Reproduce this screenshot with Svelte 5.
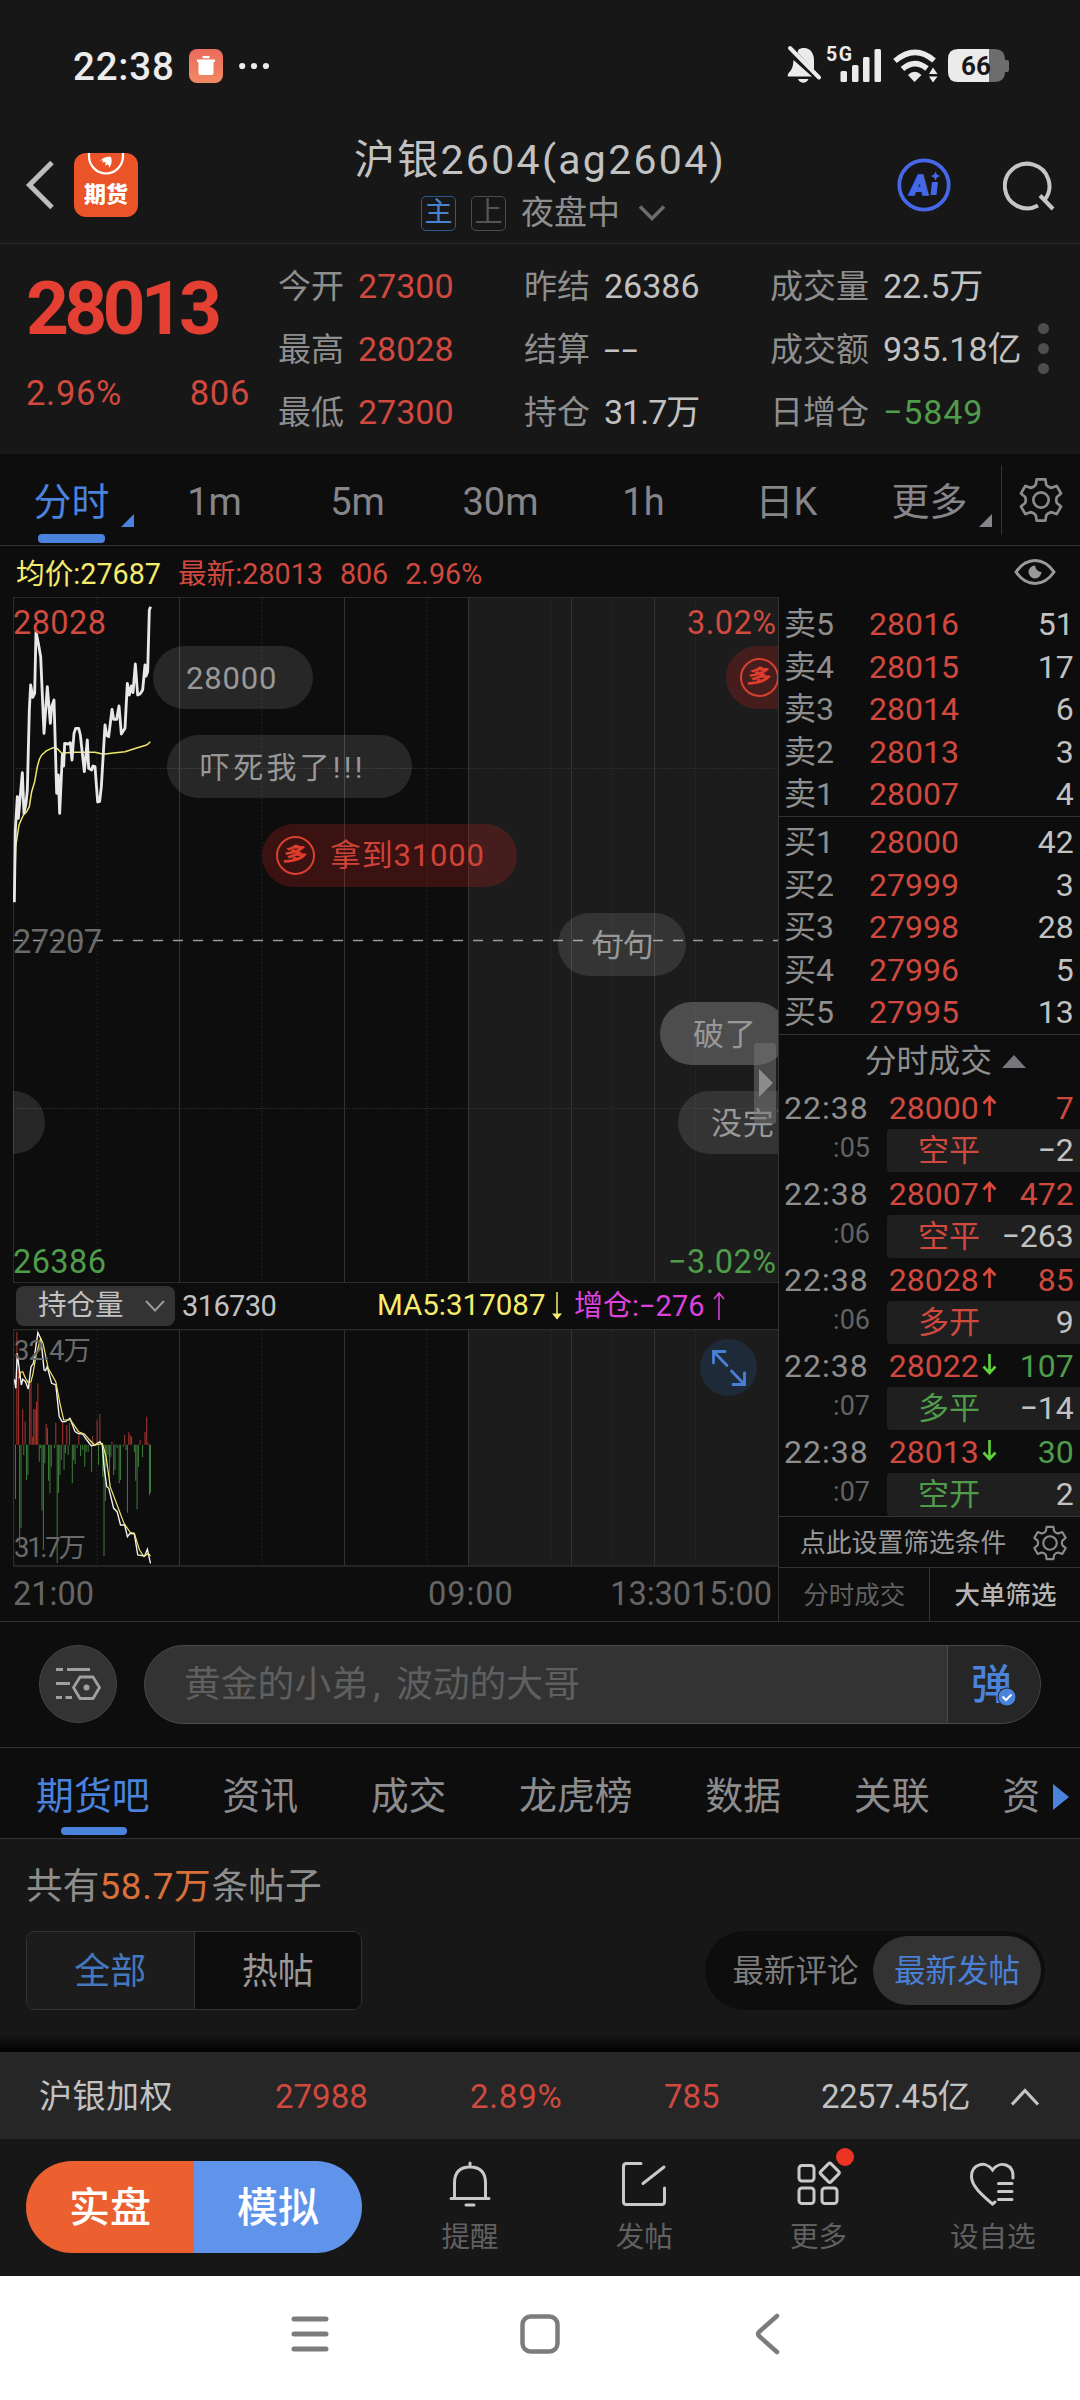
<script lang="ts">
    type Item = [string, string, string];

    const quotes: Array<Item[]> = [
        [["今开", "27300", "red"], ["最高", "28028", "red"], ["最低", "27300", "red"]],
        [["昨结", "26386", ""], ["结算", "--", "none"], ["持仓", "31.7万", "unit"]],
        [["成交量", "22.5万", ""], ["成交额", "935.18亿", ""], ["日增仓", "−5849", "green"]],
    ];

    const periods = ["分时", "1m", "5m", "30m", "1h", "日K", "更多"];

    const sells = [["卖5", "28016", "51"], ["卖4", "28015", "17"], ["卖3", "28014", "6"], ["卖2", "28013", "3"], ["卖1", "28007", "4"]];
    const buys = [["买1", "28000", "42"], ["买2", "27999", "3"], ["买3", "27998", "28"], ["买4", "27996", "5"], ["买5", "27995", "13"]];

    const ticks = [
        { sec: ":05", price: "28000", up: true, qty: "7", kind: "空平", kindColor: "red", delta: "−2" },
        { sec: ":06", price: "28007", up: true, qty: "472", kind: "空平", kindColor: "red", delta: "−263" },
        { sec: ":06", price: "28028", up: true, qty: "85", kind: "多开", kindColor: "red", delta: "9" },
        { sec: ":07", price: "28022", up: false, qty: "107", kind: "多平", kindColor: "green", delta: "−14" },
        { sec: ":07", price: "28013", up: false, qty: "30", kind: "空开", kindColor: "green", delta: "2" },
    ];

    const tabs = ["期货吧", "资讯", "成交", "龙虎榜", "数据", "关联", "资"];

    // floating comments, x / y inside the chart
    const bullets = [
        { x: 140, y: 49, w: 160, text: "28000", cls: "" },
        { x: 154, y: 138, w: 245, text: "吓死我了!!!", cls: "wide" },
        { x: 249, y: 227, w: 255, text: "拿到31000", cls: "long" },
        { x: 713, y: 49, w: 200, text: "", cls: "long" },
        { x: 545, y: 316, w: 128, text: "句句", cls: "" },
        { x: 647, y: 405, w: 128, text: "破了", cls: "bright" },
        { x: 665, y: 494, w: 160, text: "没完了", cls: "" },
        { x: -100, y: 494, w: 132, text: "", cls: "" },
    ];

    const solidX = [179.5, 344.5, 468.5, 571.5, 654.5];
    const dottedX = [97, 262, 427, 551, 612.5, 695.5];

    const priceLine = "43,937 46,720 52,620 55,685 67,548 72,670 78,640 82,600 88,360 92,285 98,322 104,310 108,125 115,160 122,200 132,430 142,290 151,400 155,350 162,330 170,610 175,555 179,670 187,495 191,528 194,460 204,462 211,458 216,510 222,430 227,415 236,415 241,435 253,545 262,450 266,535 275,540 279,528 285,530 293,636 299,634 304,590 315,405 320,436 326,440 336,358 341,388 350,388 357,348 364,432 375,415 382,280 388,315 394,288 399,308 406,222 413,315 420,312 428,300 435,225 438,258 443,245 448,60 452,50";
    const avgLine = "44,900 47,770 57,705 70,675 80,665 88,650 95,605 104,575 112,530 118,508 125,495 140,482 155,475 165,472 173,477 185,490 220,487 285,487 310,493 340,489 375,485 410,474 440,465 446,460 451,455";

    const oiLine = "42,328 46,355 50,250 55,290 62,345 66,328 74,335 82,357 90,290 97,280 110,188 118,205 123,250 128,300 132,302 137,290 150,340 162,345 172,440 180,455 190,455 203,445 218,485 226,490 240,492 252,510 265,527 275,525 290,515 297,525 303,600 310,650 316,655 330,715 340,725 350,765 362,765 370,800 378,790 390,792 400,855 420,858 428,838 437,880";
    const oiMa = "55,325 60,307 66,305 74,325 82,338 90,335 95,315 105,255 118,205 125,220 140,295 162,335 175,405 185,450 205,450 228,485 245,492 260,510 275,525 297,520 308,560 320,650 340,705 360,760 378,787 390,790 405,840 418,860 430,850 437,858";

    const redBars = [[49, 186], [54, 300], [66, 418], [73, 455], [86, 335], [90, 335], [95, 500], [98, 418], [102, 418], [106, 395], [110, 340], [134, 462], [138, 475], [162, 458], [182, 455], [194, 465], [202, 458], [229, 488], [269, 498], [282, 450], [290, 432], [325, 516], [362, 495], [374, 487], [378, 495], [382, 500], [407, 510], [421, 487], [426, 440], [430, 518]];
    const greenBars = [[45, 687], [57, 830], [61, 775], [69, 555], [77, 630], [81, 615], [114, 575], [118, 535], [122, 722], [126, 840], [130, 580], [141, 632], [145, 670], [149, 590], [158, 535], [166, 880], [170, 668], [174, 615], [178, 570], [186, 600], [190, 550], [198, 555], [210, 640], [214, 570], [218, 583], [224, 535], [234, 558], [240, 540], [246, 590], [250, 545], [256, 545], [266, 605], [286, 585], [298, 620], [302, 858], [306, 692], [310, 590], [314, 555], [318, 650], [322, 560], [330, 615], [334, 600], [340, 535], [346, 640], [350, 630], [358, 530], [366, 540], [370, 728], [390, 545], [394, 632], [398, 718], [402, 590], [414, 562], [434, 675], [437, 668]];

    const gearPath = () => {
        const pts: string[] = [];
        for (let i = 0; i < 6; i++) {
            const a = i * 60 - 90;
            for (const [r, d] of [[11, -12], [11, 12], [8.4, 19], [7.9, 30], [8.4, 41]]) {
                const t = ((a + d) * Math.PI) / 180;
                pts.push(`${(12 + r * Math.cos(t)).toFixed(2)} ${(12 + r * Math.sin(t)).toFixed(2)}`);
            }
        }
        return "M" + pts.join("L") + "Z";
    };
    const gear = gearPath();
</script>

<div class="screen">
    <div class="status">
        <span class="clock">22:38</span>
        <svg width="34" height="34" viewBox="0 0 34 34">
            <defs>
                <linearGradient id="trash" x1="0" y1="0" x2="0" y2="1">
                    <stop offset="0" stop-color="#ea6b5c" />
                    <stop offset="1" stop-color="#f08a63" />
                </linearGradient>
            </defs>
            <rect width="34" height="34" rx="8" fill="url(#trash)" />
            <path d="M8 10.5H26V13H24.5V24Q24.500 26 22.500 26H11.500Q9.500 26 9.500 24V13H8ZM13.500 7H20.500V9.300H13.500Z" fill="#fff" />
        </svg>
        <svg class="more" width="30" height="8" viewBox="0 0 30 8" fill="#ececec">
            <circle cx="3.200" cy="4" r="3.100" /><circle cx="15" cy="4" r="3.100" /><circle cx="27" cy="4" r="3.100" />
        </svg>
        <svg class="system" width="224" height="44" viewBox="786 44 224 44" fill="#ebebeb">
            <path d="M798.500 49.500C808 45 814 52 814 60V70L797.500 52.500ZM793.500 60L812 76.500H789C787 76.500 787.500 74.500 789 72.500C792.500 69 793 66 793.500 60ZM798 79H808.500C806.500 84 800 84 798 79Z" />
            <path d="M790 48L819 77.500" stroke="#ebebeb" stroke-width="4" stroke-linecap="round" />
            <text x="826" y="61" font-size="19.500" font-weight="700" textLength="26">5G</text>
            <rect x="840.500" y="71" width="6.500" height="11" rx="1.500" />
            <rect x="852" y="65" width="6.500" height="17" rx="1.500" />
            <rect x="863" y="57" width="6.500" height="25" rx="1.500" />
            <rect x="874.500" y="49" width="6.500" height="33" rx="1.500" />
            <path d="M895 61Q915 44 934 60.500" fill="none" stroke="#ebebeb" stroke-width="5.500" />
            <path d="M902.500 69Q914.500 58.500 927 68.500" fill="none" stroke="#ebebeb" stroke-width="5.500" />
            <path d="M908 75Q914.500 68.500 921.500 75L914.500 82Z" />
            <path d="M929 74L933 67.500L937.500 74ZM929 76.500L933 82.500L937.500 76.500Z" />
            <path d="M988 49H994Q1005 49 1005 60V72Q1005 82 994 82H988Z" fill="#6d6d6d" />
            <rect x="1003" y="60" width="6" height="12" rx="2" fill="#6d6d6d" />
            <path d="M989 49H958Q948 49 948 59V72Q948 82 958 82H989Z" />
            <text x="961" y="75" font-size="26" font-weight="700" fill="#171717" textLength="30">66</text>
        </svg>
    </div>

    <div class="navbar">
        <div class="side">
            <svg width="30" height="50" viewBox="0 0 30 50" fill="none" stroke="#bdbdbd" stroke-width="5"><path d="M27 2.500L4.500 25L27 47.500" /></svg>
            <div class="logo">
                <svg width="64" height="24" viewBox="0 0 64 24" fill="none" stroke="#fff">
                    <path d="M15 0V3A17 17.500 0 0 0 49 3V0" stroke-width="2.200" />
                    <path d="M26 8Q31 3 37 4Q39 10 35 15Q35 9 31 13Q33 7 28 10Q31 6 26 8Z" fill="#fff" stroke="none" />
                </svg>
                <span>期货</span>
            </div>
        </div>
        <div class="title">
            <h1>沪银2604(ag2604)</h1>
            <div class="session">
                <span class="badge main">主</span>
                <span class="badge">上</span>
                <span>夜盘中</span>
                <svg width="28" height="18" viewBox="0 0 28 18" fill="none" stroke="#6c6c6c" stroke-width="3.500"><path d="M2 2.500L14 14.500L26 2.500" /></svg>
            </div>
        </div>
        <div class="side end">
            <svg width="54" height="54" viewBox="0 0 54 54" fill="#4567e8">
                <circle cx="27" cy="27" r="24.700" fill="none" stroke="#4567e8" stroke-width="3.800" />
                <text transform="translate(12 36.500) skewX(-6)" font-size="28" font-weight="900" stroke="#4567e8" stroke-width="1.500">A</text>
                <path d="M35 24H41L39.500 37H33.500ZM38.500 13.500L40 16.500L43 18L40 19.500L38.500 22.500L37 19.500L34 18L37 16.500Z" />
            </svg>
            <svg width="54" height="54" viewBox="0 0 54 54" fill="none" stroke="#c6c6c6" stroke-width="4">
                <path d="M35 47.500A22.300 22.300 0 1 1 41.500 42M37 37.500L50 51" />
            </svg>
        </div>
    </div>

    <div class="quote">
        <div class="last">
            <b>28013</b>
            <div><span>2.96%</span><span>806</span></div>
        </div>
        {#each quotes as col}
            <div class="col">
                {#each col as [label, value, color]}
                    <div><label>{label}</label><span class={color}>{value}</span></div>
                {/each}
            </div>
        {/each}
        <div class="dots"><i></i><i></i><i></i></div>
    </div>

    <div class="periods">
        {#each periods as p, i}
            <div class="period" class:active={i === 0} class:corner={i === 0 || i === 6}>{p}</div>
        {/each}
        <div class="setting">
            <svg width="46" height="46" viewBox="0 0 24 24" fill="none" stroke="#8c8c8f" stroke-width="1.400" stroke-linejoin="round">
                <path d={gear} /><circle cx="12" cy="12" r="4" />
            </svg>
        </div>
    </div>

    <div class="legend">
        <span class="yellow">均价:27687</span>
        <span class="red">最新:28013</span>
        <span class="red">806</span>
        <span class="red">2.96%</span>
        <svg width="42" height="28" viewBox="0 0 42 28" fill="none" stroke="#999" stroke-width="3">
            <path d="M2 14Q10 2.500 21 2.500T40 14Q32 25.500 21 25.500T2 14Z" />
            <path d="M21 7.500A6.500 6.500 0 1 0 27.500 14Q22 14 21 7.500Z" fill="#999" stroke="none" />
        </svg>
    </div>

    <div class="market">
        <div class="charts">
            <div class="price-chart">
                <svg width="765" height="686" viewBox="13 597 765 686">
                    <rect x="468.500" y="598" width="310" height="684" fill="#1c1c1c" />
                    {#each dottedX as x}
                        <line x1={x} x2={x} y1="598" y2="1282" stroke="#2b2b2b" stroke-dasharray="1.500 2.500" />
                    {/each}
                    {#each solidX as x}
                        <line x1={x} x2={x} y1="598" y2="1282" stroke="#333" />
                    {/each}
                    {#each [768.5, 1108.5] as y}
                        <line x1="13" x2="778" y1={y} y2={y} stroke="#303030" stroke-dasharray="1.500 1.500" />
                    {/each}
                    <path d="M13.500 598V1282.500H778" fill="none" stroke="#2c2c2c" />
                    <line x1="13" x2="778" y1="597.500" y2="597.500" stroke="#2a2a2a" />
                    <g fill="none" transform="translate(0 590) scale(.33333)" stroke-linejoin="round">
                        <polyline points={avgLine} stroke="#efe66a" stroke-width="4.500" />
                        <polyline points={priceLine} stroke="#e8e8e8" stroke-width="8.500" />
                    </g>
                    <line x1="13" x2="778" y1="940.500" y2="940.500" stroke="#9a9a9a" stroke-width="1.600" stroke-dasharray="10 10" />
                    <g font-size="32.500">
                        <text x="13" y="633.500" fill="#cf4a3f" textLength="93">28028</text>
                        <text x="13" y="953" fill="#6a6a6a" textLength="89">27207</text>
                        <text x="13" y="1273" fill="#4f9c4b" textLength="93">26386</text>
                        <text x="687" y="633.500" fill="#cf4a3f" textLength="89">3.02%</text>
                        <text x="668" y="1273" fill="#4f9c4b" textLength="108">−3.02%</text>
                    </g>
                </svg>
                {#each bullets as b}
                    <div class="bullet {b.cls}" style="left: {b.x}px; top: {b.y}px; width: {b.w}px">
                        {#if b.cls === "long"}<em><span>多</span></em>{/if}
                        {b.text}
                    </div>
                {/each}
                <div class="handle"></div>
            </div>

            <div class="indicator">
                <div class="select">持仓量
                    <svg width="20" height="14" viewBox="0 0 20 14" fill="none" stroke="#999" stroke-width="2"><path d="M1 2L10 11.500L19 2" /></svg>
                </div>
                <span class="oi">316730</span>
                <span class="ma">MA5:317087</span>
                <svg class="ma-arrow" width="12" height="30" viewBox="0 0 12 30" fill="none" stroke="#f5ec6e" stroke-width="1.500"><path d="M6 1V28" /><path d="M1 22.500L6 28.500L11 22.500Z" fill="#f5ec6e" stroke="none" /></svg>
                <span class="add">增仓:−276</span>
                <svg class="add-arrow" width="12" height="30" viewBox="0 0 12 30" fill="none" stroke="#dd42dd" stroke-width="1.500"><path d="M6 2V29M1 8L6 2L11 8" /></svg>
            </div>

            <div class="oi-chart">
                <svg width="765" height="239" viewBox="13 1329 765 239">
                    <rect x="468.500" y="1329" width="310" height="237" fill="#1c1c1c" />
                    {#each dottedX as x}
                        <line x1={x} x2={x} y1="1330" y2="1566" stroke="#2b2b2b" stroke-dasharray="1.500 2.500" />
                    {/each}
                    {#each solidX as x}
                        <line x1={x} x2={x} y1="1330" y2="1566" stroke="#333" />
                    {/each}
                    <path d="M778 1329.500H13.500V1566H778" fill="none" stroke="#2c2c2c" stroke-width="1.500" />
                    <g fill="none" transform="translate(0 1270) scale(.3444 .33333)">
                        {#each redBars as [x, y]}
                            <line x1={x} x2={x} y1="524" y2={y} stroke="#a8352e" stroke-width="3" />
                        {/each}
                        {#each greenBars as [x, y]}
                            <line x1={x} x2={x} y1="524" y2={y} stroke="#3c7a39" stroke-width="3" />
                        {/each}
                        <polyline points={oiLine} stroke="#f2f2f2" stroke-width="4" />
                        <polyline points={oiMa} stroke="#efe66a" stroke-width="3.500" />
                    </g>
                    <g font-size="27.500" fill="#6a6a6a">
                        <text x="14" y="1360" textLength="77">32.4万</text>
                        <text x="14" y="1557" textLength="72">31.7万</text>
                    </g>
                </svg>
                <div class="expand">
                    <svg width="36" height="38" viewBox="0 0 36 38" fill="none" stroke="#4a7fd6" stroke-width="2.800" stroke-linecap="round">
                        <path d="M2.500 14V2.500H14M2.500 2.500L16 16.500M33.500 24V35.500H22M33.500 35.500L20.500 22" />
                    </svg>
                </div>
            </div>

            <div class="axis">
                <span>21:00</span><span class="nine">09:00</span><span class="close">13:3015:00</span>
            </div>
        </div>

        <div class="depth">
            <div class="book">
                {#each sells as [label, price, qty]}
                    <div class="level"><label>{label}</label><span class="red">{price}</span><b>{qty}</b></div>
                {/each}
            </div>
            <div class="book buy">
                {#each buys as [label, price, qty]}
                    <div class="level"><label>{label}</label><span class="red">{price}</span><b>{qty}</b></div>
                {/each}
            </div>
            <div class="tick-title">分时成交<i></i></div>
            {#each ticks as t}
                <div class="tick">
                    <span class="time">22:38</span>
                    <span class="price red">{t.price}</span>
                    <svg width="15" height="22" viewBox="0 0 15 22" fill="none" stroke={t.up ? "#e0483a" : "#5fd23c"} stroke-width="2.600">
                        {#if t.up}<path d="M7.500 21V2M1.500 8.500L7.500 2L13.500 8.500" />{:else}<path d="M7.500 1V20M1.500 13.500L7.500 20L13.500 13.500" />{/if}
                    </svg>
                    <span class="qty {t.up ? 'red' : 'green'}">{t.qty}</span>
                </div>
                <div class="tick sub">
                    <span class="sec">{t.sec}</span>
                    <div class="kind"><span class={t.kindColor}>{t.kind}</span><b>{t.delta}</b></div>
                </div>
            {/each}
            <div class="filter">
                点此设置筛选条件
                <svg width="36" height="36" viewBox="0 0 24 24" fill="none" stroke="#8c8c8c" stroke-width="1.400" stroke-linejoin="round">
                    <path d={gear} /><circle cx="12" cy="12" r="4.500" />
                </svg>
            </div>
            <div class="depth-tabs"><span>分时成交</span><span class="on">大单筛选</span></div>
        </div>
    </div>

    <div class="comment">
        <div class="round">
            <svg width="46" height="34" viewBox="0 0 46 34" fill="none" stroke="#a0a0a0" stroke-width="2.800">
                <path d="M1 2.500H8M12 2.500H35M1 16.500H15M1 30.500H7M10.500 30.500H17" />
                <path d="M25 10H38L44.500 20.500L38 31.500H25L18.500 20.500Z" stroke-linejoin="round" />
                <circle cx="31.500" cy="20.500" r="1.600" fill="#a0a0a0" />
            </svg>
        </div>
        <div class="input">
            <span>黄金的小弟<i>,</i>波动的大哥</span>
            <div class="danmu">
                弹
                <svg width="20" height="20" viewBox="0 0 20 20"><circle cx="10" cy="10" r="9" fill="#4a82dc" stroke="#262626" stroke-width="1" /><path d="M5.500 9.500L9 13L14.500 7.500" fill="none" stroke="#fff" stroke-width="2" /></svg>
            </div>
        </div>
    </div>

    <div class="tabs">
        {#each tabs as t, i}
            <span class:active={i === 0}>{t}</span>
        {/each}
        <i></i>
    </div>

    <div class="posts">
        <p>共有<em>58.7万</em>条帖子</p>
        <div class="filters">
            <div class="segment"><span class="on">全部</span><span>热帖</span></div>
            <div class="sort"><span>最新评论</span><span class="on">最新发帖</span></div>
        </div>
    </div>

    <div class="index">
        <span class="name">沪银加权</span>
        <span class="red">27988</span>
        <span class="red pct">2.89%</span>
        <span class="red">785</span>
        <span class="amount">2257.45亿</span>
        <svg width="30" height="20" viewBox="0 0 30 20" fill="none" stroke="#c4c4c4" stroke-width="3.200"><path d="M2 17.500L15 3.500L28 17.500" /></svg>
    </div>

    <div class="actions">
        <div class="trade"><span>实盘</span><span class="demo">模拟</span></div>
        <div class="action">
            <svg width="46" height="46" viewBox="0 0 46 46" fill="none" stroke="#c9c9c9" stroke-width="3" stroke-linecap="round">
                <path d="M23 2V6M7.500 37V22Q7.500 6 23 6T38.500 22V37M4 37.500H42M19 44H27" />
            </svg>
            <span>提醒</span>
        </div>
        <div class="action">
            <svg width="46" height="46" viewBox="0 0 46 46" fill="none" stroke="#c9c9c9" stroke-width="3" stroke-linecap="round">
                <path d="M20 2.500H5.500Q2.500 2.500 2.500 5.500V40.500Q2.500 43.500 5.500 43.500H40.500Q43.500 43.500 43.500 40.500V27M43 6L22 22.500" />
            </svg>
            <span>发帖</span>
        </div>
        <div class="action dot">
            <svg width="46" height="46" viewBox="0 0 46 46" fill="none" stroke="#c9c9c9" stroke-width="3">
                <rect x="3" y="4.500" width="15" height="15.500" rx="3" />
                <rect x="3" y="27" width="15" height="15.500" rx="3" />
                <rect x="26" y="27" width="15" height="15.500" rx="3" />
                <rect x="26.500" y="4.500" width="14.500" height="14.500" rx="2" transform="rotate(45 33.750 11.750)" />
            </svg>
            <span>更多</span>
        </div>
        <div class="action">
            <svg width="46" height="46" viewBox="0 0 46 46" fill="none" stroke="#c9c9c9" stroke-width="3" stroke-linecap="round">
                <path d="M25 41L22.500 43C12 34 1.500 25 1.500 15.500C1.500 3 15.500 -1 22.500 9C30 -1 44 3 43 17M28.500 22.500H42M28.500 30.500H42M28.500 38.500H42" />
            </svg>
            <span>设自选</span>
        </div>
    </div>

    <div class="system-nav">
        <svg width="38" height="40" viewBox="0 0 38 40" stroke="#7c7c7c" stroke-width="5" stroke-linecap="round"><path d="M3 5H35M3 20H35M3 35H35" /></svg>
        <svg width="40" height="40" viewBox="0 0 40 40" fill="none" stroke="#7c7c7c" stroke-width="4.500"><rect x="2.500" y="2.500" width="35" height="35" rx="8" /></svg>
        <svg width="28" height="42" viewBox="0 0 28 42" fill="none" stroke="#7c7c7c" stroke-width="4.500" stroke-linecap="round" stroke-linejoin="round"><path d="M24 3L6 19Q4 21 6 23L24 39" /></svg>
    </div>
</div>

<style>
    :global(body) {
        margin: 0;
        background: #0d0d0d;
    }

    .screen {
        width: 1080px;
        height: 2400px;
        overflow: hidden;
        display: flex;
        flex-direction: column;
        background: #0d0d0d;
        color: #c2c2c2;
        font-family: Roboto, "Noto Sans CJK SC", sans-serif;
        line-height: 1.2;
    }

    .screen > div {
        flex: none;
        box-sizing: border-box;
    }

    svg {
        display: block;
        flex: none;
    }

    .red { color: #d1493e; }
    .green { color: #4f9c4b; }
    .yellow { color: #f5ec6e; }

    .status {
        height: 132px;
        display: flex;
        align-items: center;
        padding: 0 70px 0 73px;
        background: #171717;
    }

    .clock {
        width: 116px;
        padding-top: 2px;
        font-size: 38.500px;
        font-weight: 500;
        letter-spacing: 0.800px;
        color: #ececec;
    }

    .more { margin-left: 16px; }
    .system { margin-left: auto; }

    .navbar {
        height: 112px;
        display: grid;
        grid-template-columns: 1fr auto 1fr;
        background: #171717;
        border-bottom: 1px solid #2a2a2a;
    }

    .side {
        display: flex;
        align-items: flex-start;
        gap: 19px;
        padding: 21px 0 0 25px;
    }

    .side > svg { margin-top: 7px; }

    .end {
        justify-content: flex-end;
        gap: 52px;
        padding: 19px 23px 0 0;
    }

    .logo {
        width: 64px;
        height: 64px;
        border-radius: 12px;
        background: #ea5428;
        text-align: center;
    }

    .logo span {
        display: block;
        margin-top: 5px;
        font-size: 22px;
        font-weight: 900;
        color: #fff;
    }

    h1 {
        margin: 0;
        height: 55px;
        line-height: 57px;
        font-size: 41px;
        font-weight: 400;
        letter-spacing: 2.300px;
    }

    .session {
        display: flex;
        align-items: center;
        justify-content: center;
        gap: 15px;
        height: 52px;
        padding-left: 7px;
        font-size: 33px;
        color: #8e8e8e;
    }

    .session svg { margin-left: 3px; }

    .badge {
        box-sizing: border-box;
        width: 35px;
        height: 35px;
        line-height: 32px;
        border: 1.500px solid #4c4c4c;
        border-radius: 5px;
        text-align: center;
        font-size: 28px;
        color: #555;
    }

    .badge.main {
        border-color: #2f588f;
        color: #4a82d2;
    }

    .quote {
        height: 210px;
        display: grid;
        grid-template-columns: 278px 246px 246px 263px 20px;
        background: #171717;
    }

    .last { padding: 19px 28px 0 26px; }

    .last b {
        display: block;
        font-size: 75px;
        letter-spacing: -4.800px;
        color: #e34033;
    }

    .last div {
        display: flex;
        justify-content: space-between;
        margin-top: 20px;
        font-size: 34.500px;
        letter-spacing: 0.700px;
        color: #d1493e;
    }

    .col { padding-top: 11px; }

    .col div {
        display: flex;
        align-items: center;
        gap: 14px;
        height: 63px;
        font-size: 33px;
        white-space: nowrap;
    }

    .col label { color: #8e8e8e; }
    .col span { font-size: 34px; }
    .col .none { letter-spacing: 1px; transform: scaleX(1.700); transform-origin: left; }
    .col .unit { letter-spacing: -1px; }
    .col .green { letter-spacing: 0.900px; }

    .dots {
        display: flex;
        flex-direction: column;
        align-items: center;
        gap: 9px;
        padding-top: 79px;
    }

    .dots i {
        width: 11px;
        height: 11px;
        border-radius: 50%;
        background: #4e4e4e;
    }

    .periods {
        height: 92px;
        display: flex;
        border-bottom: 1px solid #333;
    }

    .period {
        position: relative;
        width: 143px;
        height: 91px;
        line-height: 96px;
        text-align: center;
        font-size: 38px;
        color: #85858a;
    }

    .period.active { color: #4a82dc; }

    .period.active::before {
        content: "";
        position: absolute;
        left: 38px;
        bottom: 2px;
        width: 67px;
        height: 9px;
        border-radius: 4px;
        background: #4a82dc;
    }

    .corner::after {
        content: "";
        position: absolute;
        right: 9px;
        bottom: 18px;
        border-left: 13px solid transparent;
        border-bottom: 13px solid currentColor;
    }

    .setting {
        width: 78px;
        height: 70px;
        margin: 11px 0 0;
        display: flex;
        align-items: center;
        justify-content: center;
        border-left: 1px solid #333;
    }

    .legend {
        height: 51px;
        display: flex;
        align-items: center;
        gap: 17px;
        padding: 6px 24px 0 16px;
        font-size: 28.700px;
    }

    .legend svg { margin: -6px 0 0 auto; }

    .market {
        height: 1025px;
        display: flex;
        border-bottom: 1px solid #333;
    }

    .charts {
        width: 765px;
        margin-left: 13px;
        flex: none;
    }

    .price-chart {
        position: relative;
        height: 686px;
        overflow: hidden;
    }

    .bullet {
        position: absolute;
        box-sizing: border-box;
        height: 63px;
        padding-left: 33px;
        line-height: 66px;
        border-radius: 32px;
        background: rgba(255, 255, 255, 0.11);
        font-size: 31px;
        letter-spacing: 0.800px;
        white-space: nowrap;
        color: #989898;
    }

    .bullet.wide { letter-spacing: 3.200px; font-size: 30px; }

    .bullet.bright { background: rgba(255, 255, 255, 0.22); }

    .bullet.long {
        display: flex;
        align-items: center;
        gap: 15px;
        padding-left: 14px;
        background: rgba(220, 38, 38, 0.22);
        color: #cf4338;
    }

    .bullet em {
        box-sizing: border-box;
        width: 39px;
        height: 39px;
        line-height: 34px;
        border: 2px solid #d8402f;
        border-radius: 50%;
        text-align: center;
        font-size: 24px;
        font-weight: 900;
        font-style: normal;
        letter-spacing: 0;
        color: #e03e2c;
    }

    .bullet em span {
        display: block;
        transform: skewX(-10deg) scaleY(0.800);
    }

    .handle {
        position: absolute;
        right: 2px;
        top: 446px;
        width: 22px;
        height: 81px;
        border-radius: 3px;
        background: rgba(120, 120, 120, 0.5);
    }

    .handle::after {
        content: "";
        position: absolute;
        left: 5px;
        top: 26px;
        border-left: 14px solid #8c8c8c;
        border-top: 14px solid transparent;
        border-bottom: 14px solid transparent;
    }

    .indicator {
        height: 46px;
        display: flex;
        align-items: center;
        font-size: 31px;
    }

    .select {
        box-sizing: border-box;
        width: 159px;
        height: 40px;
        margin-left: 3px;
        padding: 0 10px 0 22px;
        display: flex;
        align-items: center;
        justify-content: space-between;
        border-radius: 8px;
        background: #333;
        font-size: 28.500px;
    }

    .oi {
        width: 195px;
        margin-left: 7px;
        font-size: 29px;
        letter-spacing: -0.600px;
    }

    .ma {
        width: 174px;
        font-size: 29.500px;
        color: #f5ec6e;
    }

    .ma-arrow { margin-right: 11px; }

    .add {
        width: 139px;
        font-size: 29px;
        color: #dd42dd;
        white-space: nowrap;
    }

    .oi-chart {
        position: relative;
        height: 239px;
    }

    .expand {
        position: absolute;
        right: 21px;
        top: 10px;
        width: 57px;
        height: 57px;
        display: flex;
        align-items: center;
        justify-content: center;
        border-radius: 50%;
        background: #1f2a38;
    }

    .axis {
        display: flex;
        height: 53px;
        line-height: 52px;
        font-size: 32.500px;
        color: #666;
    }

    .nine { margin-left: 334px; letter-spacing: 1px; }
    .close { margin-left: auto; padding-right: 6px; }

    .depth {
        flex: 1;
        border-left: 1px solid #333;
        font-size: 32px;
    }

    .book {
        height: 220px;
        box-sizing: border-box;
        padding-top: 6px;
        border-bottom: 1px solid #333;
    }

    .book.buy {
        height: 218px;
        padding-top: 4px;
    }

    .level {
        display: flex;
        align-items: center;
        height: 42.600px;
        padding: 0 7px 0 5px;
    }

    .level label { width: 71px; color: #8e8e8e; }
    .level span { width: 104px; text-align: right; }
    .level b { flex: 1; text-align: right; }

    b { font-weight: 400; }
    .last b { font-weight: 700; }

    .tick-title {
        display: flex;
        align-items: center;
        justify-content: center;
        gap: 10px;
        box-sizing: border-box;
        height: 51px;
        padding: 2px 0 0 31px;
        font-size: 31.800px;
        color: #8e8e8e;
    }

    .tick-title i {
        border-bottom: 13px solid #77777b;
        border-left: 12px solid transparent;
        border-right: 12px solid transparent;
    }

    .tick {
        display: flex;
        align-items: center;
        box-sizing: border-box;
        height: 43px;
        padding: 1px 7px 0 5px;
    }

    .time { color: #8e8e8e; letter-spacing: 1px; }
    .price { margin-left: auto; width: 110px; text-align: right; }
    .tick svg { margin: -5px 0 0 3px; }
    .qty { width: 77px; text-align: right; }

    .tick.sub { padding: 0 0 0 7px; }

    .sec {
        width: 84px;
        padding-bottom: 5px;
        text-align: right;
        font-size: 27px;
        color: #636363;
    }

    .kind {
        display: flex;
        align-items: center;
        flex: 1;
        height: 43px;
        margin-left: 17px;
        padding-right: 7px;
        border-radius: 4px 0 0 4px;
        background: #1f1f1f;
    }

    .kind span { margin-left: 31px; font-size: 31px; }
    .kind b { flex: 1; text-align: right; }

    .filter {
        display: flex;
        align-items: center;
        justify-content: space-between;
        height: 52px;
        box-sizing: border-box;
        padding: 2px 13px 0 21px;
        border-top: 1px solid #333;
        border-bottom: 1px solid #333;
        font-size: 25.800px;
        color: #999;
    }

    .depth-tabs {
        display: flex;
        height: 54px;
        line-height: 55px;
        text-align: center;
        font-size: 25.500px;
        color: #606060;
    }

    .depth-tabs span { flex: 1; }

    .depth-tabs .on {
        border-left: 1px solid #333;
        color: #b4b4b4;
        font-weight: 500;
    }

    .comment {
        height: 126px;
        display: flex;
        gap: 27px;
        padding: 23px 39px 0 39px;
        border-bottom: 1px solid #333;
    }

    .round {
        box-sizing: border-box;
        width: 78px;
        height: 78px;
        display: flex;
        align-items: center;
        justify-content: center;
        border: 1.500px solid #454545;
        border-radius: 50%;
        background: #333;
    }

    .input {
        box-sizing: border-box;
        flex: 1;
        display: flex;
        height: 79px;
        line-height: 78px;
        overflow: hidden;
        border: 1.500px solid #4a4a4a;
        border-radius: 40px;
        background: #333;
        font-size: 36.800px;
        color: #5f5f5f;
    }

    .input > span { flex: 1; padding-left: 39px; }

    .input i {
        display: inline-block;
        width: 28px;
        font-style: normal;
        text-indent: 5px;
    }

    .danmu {
        position: relative;
        box-sizing: border-box;
        width: 93px;
        padding-left: 23px;
        border-left: 1.500px solid #4a4a4a;
        background: #262626;
        font-size: 41px;
        font-weight: 500;
        color: #4a82dc;
    }

    .danmu svg {
        position: absolute;
        left: 49px;
        bottom: 16px;
    }

    .tabs {
        display: flex;
        align-items: center;
        gap: 72.600px;
        height: 91px;
        padding: 7px 0 0 36px;
        border-bottom: 1px solid #333;
        font-size: 37.900px;
        color: #8c8c8f;
        white-space: nowrap;
    }

    .tabs .active { position: relative; color: #4a82dc; }

    .tabs .active::after {
        content: "";
        position: absolute;
        left: 25px;
        bottom: -16px;
        width: 66px;
        height: 8px;
        border-radius: 4px;
        background: #4a82dc;
    }

    .tabs i {
        margin-left: -60px;
        border-left: 16px solid #4a82dc;
        border-top: 13px solid transparent;
        border-bottom: 13px solid transparent;
    }

    .posts {
        height: 213px;
        padding: 25px 35px 0 26px;
        background: linear-gradient(#171717 0, #171717 196px, #000 213px);
    }

    .posts p {
        margin: 0;
        height: 46px;
        line-height: 46px;
        font-size: 36.700px;
        color: #8e8e8e;
    }

    .posts em { font-style: normal; letter-spacing: 0.800px; color: #d9703a; }

    .filters {
        display: flex;
        justify-content: space-between;
        margin-top: 21px;
    }

    .segment {
        box-sizing: border-box;
        display: flex;
        width: 336px;
        height: 79px;
        border: 1px solid #333;
        border-radius: 9px;
        overflow: hidden;
        line-height: 80px;
        text-align: center;
        font-size: 36px;
    }

    .segment span { flex: 1; background: #0d0d0d; color: #989898; }
    .segment .on { background: #1c1c1c; border-right: 1px solid #333; color: #4577bd; }

    .sort {
        box-sizing: border-box;
        display: flex;
        width: 340px;
        height: 79px;
        padding: 5px 4px;
        border-radius: 40px;
        background: #0d0d0d;
        line-height: 71px;
        text-align: center;
        font-size: 31.500px;
        color: #7c7c7c;
    }

    .sort span { flex: 1; padding-left: 9px; }

    .sort .on {
        flex: none;
        width: 168px;
        padding: 0;
        border-radius: 35px;
        background: #333;
        color: #4a7fd6;
    }

    .index {
        display: grid;
        grid-template-columns: 236px 195px 194px 157px 189px 30px;
        align-items: center;
        height: 87px;
        padding: 2px 0 0 39px;
        background: #262626;
        font-size: 33px;
    }

    .name { letter-spacing: 0.500px; }
    .pct { letter-spacing: 0.800px; }
    .amount { letter-spacing: -0.500px; }

    .actions {
        display: flex;
        height: 137px;
        padding: 22px 0 0 26px;
        background: #171717;
    }

    .trade {
        display: flex;
        width: 336px;
        height: 92px;
        margin-right: 21px;
        overflow: hidden;
        border-radius: 46px;
        line-height: 95px;
        text-align: center;
        font-size: 41px;
        font-weight: 500;
        color: #fff;
    }

    .trade span { flex: 1; background: #ec6030; }
    .trade .demo { background: #5f94ea; }

    .action {
        position: relative;
        width: 174.300px;
        display: flex;
        flex-direction: column;
        align-items: center;
        gap: 14px;
        font-size: 28.500px;
        color: #606060;
    }

    .action.dot::after {
        content: "";
        position: absolute;
        top: -13px;
        right: 52px;
        width: 18px;
        height: 18px;
        border-radius: 50%;
        background: #ec3424;
    }

    .system-nav {
        display: flex;
        align-items: center;
        justify-content: space-between;
        height: 124px;
        padding: 0 299px 8px 291px;
        background: #fff;
    }

    .system-nav svg:nth-child(2) { margin-right: 2px; }
</style>
